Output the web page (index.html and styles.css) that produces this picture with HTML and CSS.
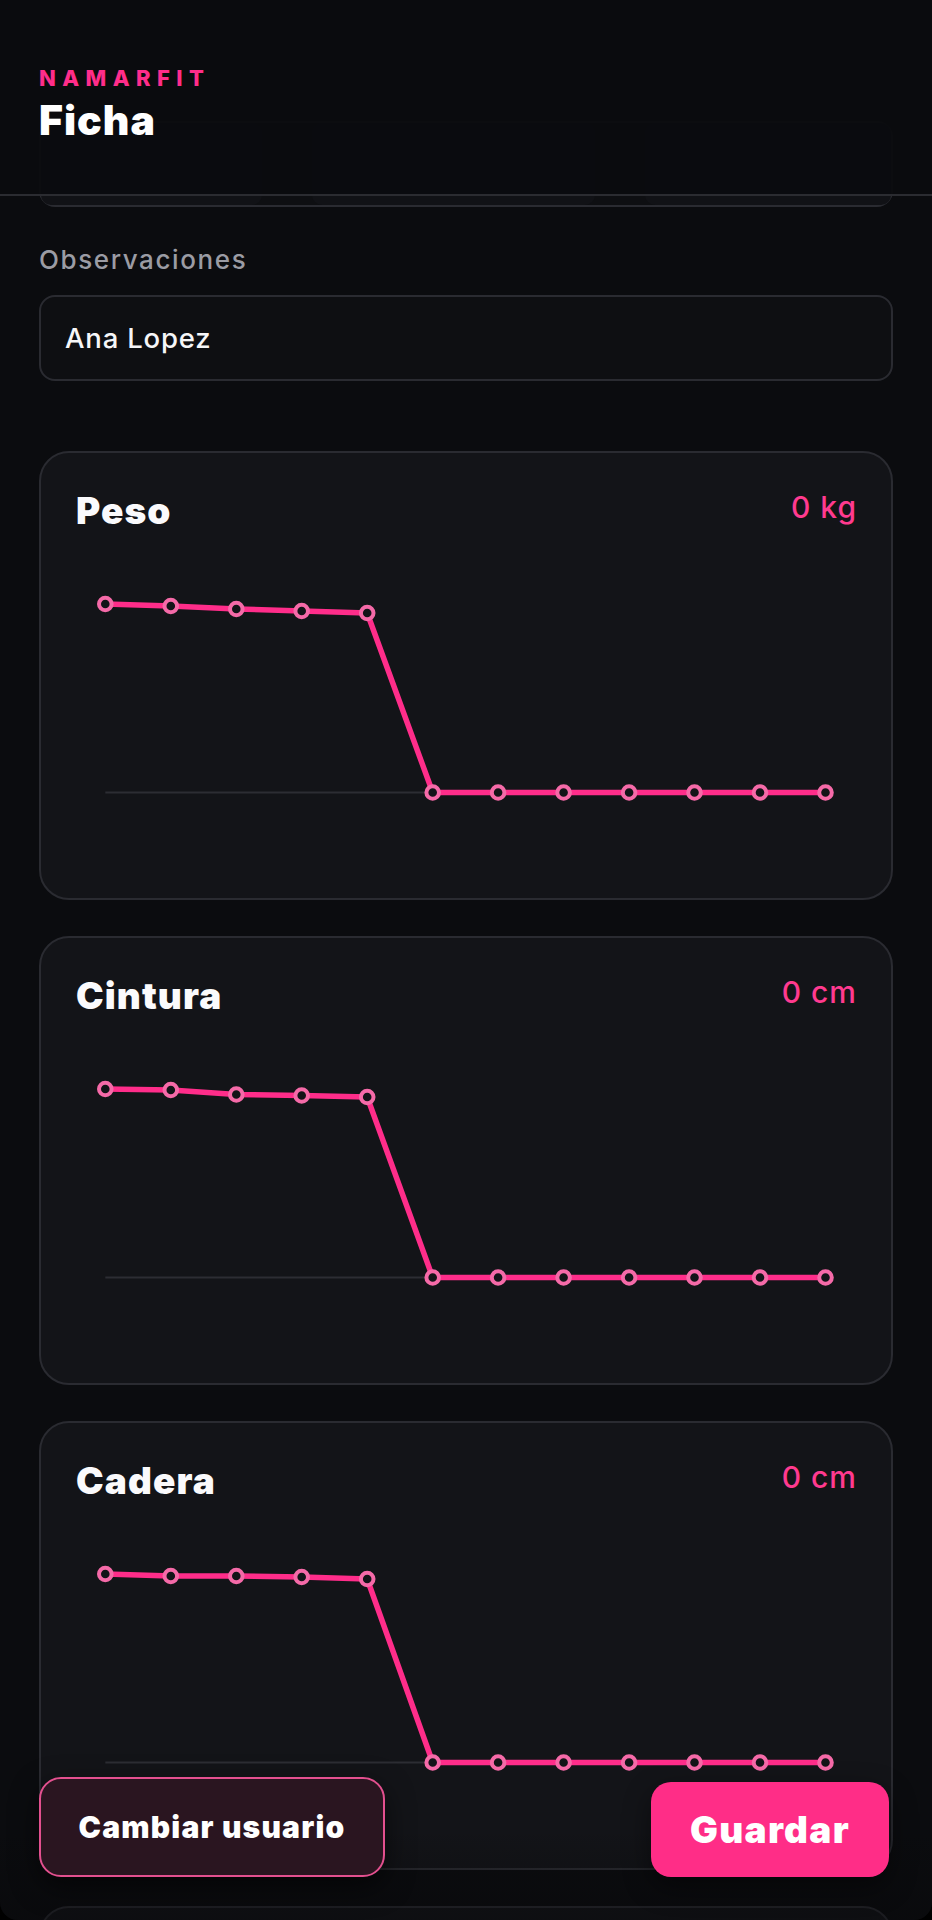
FILE: index.html
```html
<!DOCTYPE html>
<html lang="es">
<head>
<meta charset="utf-8">
<title>Ficha</title>
<link rel="stylesheet" href="styles.css">
</head>
<body>
<div class="screen">
  <main class="content">
    <div class="field-box field-box--hidden">
      <div class="seg seg--a"></div><div class="seg seg--b"></div><div class="seg seg--c"></div>
    </div>

    <div class="field">
      <label class="field-label">Observaciones</label>
      <div class="field-box"><span class="field-value">Ana Lopez</span></div>
    </div>

    <section class="card">
      <div class="card-head">
        <h2 class="card-title">Peso</h2>
        <span class="card-value">0 kg</span>
      </div>
      <svg class="chart" viewBox="0 0 850 291" width="850" height="291">
        <line class="grid" x1="64.3" y1="221.5" x2="784.5" y2="221.5"/>
        <polyline class="trend" points="64.3,33 129.8,35 195.3,38 260.7,40 326.2,42 391.7,221.5 457.1,221.5 522.6,221.5 588.1,221.5 653.5,221.5 719,221.5 784.5,221.5"/>
        <g class="dots">
          <circle cx="64.3" cy="33" r="6.3"/><circle cx="129.8" cy="35" r="6.3"/><circle cx="195.3" cy="38" r="6.3"/><circle cx="260.7" cy="40" r="6.3"/><circle cx="326.2" cy="42" r="6.3"/><circle cx="391.7" cy="221.5" r="6.3"/><circle cx="457.1" cy="221.5" r="6.3"/><circle cx="522.6" cy="221.5" r="6.3"/><circle cx="588.1" cy="221.5" r="6.3"/><circle cx="653.5" cy="221.5" r="6.3"/><circle cx="719" cy="221.5" r="6.3"/><circle cx="784.5" cy="221.5" r="6.3"/>
        </g>
      </svg>
    </section>

    <section class="card">
      <div class="card-head">
        <h2 class="card-title">Cintura</h2>
        <span class="card-value">0 cm</span>
      </div>
      <svg class="chart" viewBox="0 0 850 291" width="850" height="291">
        <line class="grid" x1="64.3" y1="221.5" x2="784.5" y2="221.5"/>
        <polyline class="trend" points="64.3,33 129.8,34 195.3,38.5 260.7,39.5 326.2,41 391.7,221.5 457.1,221.5 522.6,221.5 588.1,221.5 653.5,221.5 719,221.5 784.5,221.5"/>
        <g class="dots">
          <circle cx="64.3" cy="33" r="6.3"/><circle cx="129.8" cy="34" r="6.3"/><circle cx="195.3" cy="38.5" r="6.3"/><circle cx="260.7" cy="39.5" r="6.3"/><circle cx="326.2" cy="41" r="6.3"/><circle cx="391.7" cy="221.5" r="6.3"/><circle cx="457.1" cy="221.5" r="6.3"/><circle cx="522.6" cy="221.5" r="6.3"/><circle cx="588.1" cy="221.5" r="6.3"/><circle cx="653.5" cy="221.5" r="6.3"/><circle cx="719" cy="221.5" r="6.3"/><circle cx="784.5" cy="221.5" r="6.3"/>
        </g>
      </svg>
    </section>

    <section class="card">
      <div class="card-head">
        <h2 class="card-title">Cadera</h2>
        <span class="card-value">0 cm</span>
      </div>
      <svg class="chart" viewBox="0 0 850 291" width="850" height="291">
        <line class="grid" x1="64.3" y1="221.5" x2="784.5" y2="221.5"/>
        <polyline class="trend" points="64.3,33 129.8,35 195.3,35 260.7,36 326.2,38 391.7,221.5 457.1,221.5 522.6,221.5 588.1,221.5 653.5,221.5 719,221.5 784.5,221.5"/>
        <g class="dots">
          <circle cx="64.3" cy="33" r="6.3"/><circle cx="129.8" cy="35" r="6.3"/><circle cx="195.3" cy="35" r="6.3"/><circle cx="260.7" cy="36" r="6.3"/><circle cx="326.2" cy="38" r="6.3"/><circle cx="391.7" cy="221.5" r="6.3"/><circle cx="457.1" cy="221.5" r="6.3"/><circle cx="522.6" cy="221.5" r="6.3"/><circle cx="588.1" cy="221.5" r="6.3"/><circle cx="653.5" cy="221.5" r="6.3"/><circle cx="719" cy="221.5" r="6.3"/><circle cx="784.5" cy="221.5" r="6.3"/>
        </g>
      </svg>
    </section>

    <section class="card card--next"></section>
  </main>

  <header class="topbar">
    <div class="brand">NAMARFIT</div>
    <h1 class="title">Ficha</h1>
  </header>

  <div class="bottom-fade"></div>

  <div class="actions">
    <button class="btn btn--ghost" type="button">Cambiar usuario</button>
    <button class="btn btn--primary" type="button">Guardar</button>
  </div>
</div>
</body>
</html>
```

FILE: styles.css
```css
* { box-sizing: border-box; }

html {
  background: #000;
}

body {
  margin: 0;
  width: 932px;
  height: 1920px;
  overflow: hidden;
  font-family: Inter, "Noto Sans", "Liberation Sans", sans-serif;
  color: #f4f4f6;
}

.screen {
  position: relative;
  width: 932px;
  height: 1920px;
  overflow: hidden;
  background: #0b0c0f;
  border-radius: 0 0 18px 18px;
}

.content {
  display: flex;
  flex-direction: column;
  padding: 121px 39px 0 39px;
}

.field-box {
  height: 86px;
  border: 2px solid #2a2b31;
  border-radius: 16px;
  background: #0e0f12;
  display: flex;
  align-items: center;
  padding: 0 24px;
}

.field-box--hidden {
  padding: 0;
  gap: 50px;
  align-items: stretch;
}

.seg {
  background: #111216;
  border-radius: 10px;
}

.seg--a { flex: 221; }
.seg--b { flex: 282; }
.seg--c { flex: 246; }

.field {
  margin-top: 37px;
  display: flex;
  flex-direction: column;
  gap: 19px;
}

.field-label {
  font-size: 26px;
  line-height: 32px;
  font-weight: 500;
  letter-spacing: 1.6px;
  color: #9b9ca4;
}

.field-value {
  font-size: 27.5px;
  font-weight: 500;
  letter-spacing: 0.8px;
  color: #f6f6f8;
}

.card {
  margin-top: 36px;
  height: 449px;
  flex: none;
  border: 2px solid #2a2b31;
  border-radius: 30px;
  background: #131418;
  padding: 36px 0;
  display: flex;
  flex-direction: column;
}

.content > .field + .card {
  margin-top: 70px;
}

.card-head {
  display: flex;
  justify-content: space-between;
  align-items: flex-start;
  padding: 0 34px 0 35px;
  height: 44px;
}

.card-title {
  margin: 0;
  font-size: 37px;
  line-height: 44px;
  font-weight: 900;
  letter-spacing: 1.1px;
  color: #fafafc;
}

.card-value {
  font-size: 30px;
  line-height: 36px;
  font-weight: 500;
  letter-spacing: 1px;
  color: #ff3a8f;
}

.chart {
  display: block;
  margin-top: 38px;
  width: 850px;
  height: 291px;
}

.grid {
  stroke: #2c2d33;
  stroke-width: 2;
}

.trend {
  fill: none;
  stroke: #ff2d8a;
  stroke-width: 5.5;
  stroke-linejoin: round;
  stroke-linecap: round;
}

.dots circle {
  fill: #131418;
  stroke: #f56aa8;
  stroke-width: 4;
}

.topbar {
  position: absolute;
  top: 0;
  left: 0;
  right: 0;
  height: 196px;
  background: rgba(11, 12, 15, 0.95);
  border-bottom: 2px solid #2b2c31;
  padding: 66px 39px 0 39px;
}

.brand {
  font-size: 22px;
  line-height: 24px;
  font-weight: 800;
  letter-spacing: 6.4px;
  color: #ff2d8a;
}

.title {
  margin: 6px 0 0 0;
  font-size: 41px;
  line-height: 48px;
  font-weight: 900;
  letter-spacing: 1px;
  color: #ffffff;
}

.bottom-fade {
  position: absolute;
  left: 0;
  right: 0;
  bottom: 0;
  height: 90px;
  background: linear-gradient(to bottom, rgba(8, 8, 10, 0) 0%, rgba(8, 8, 10, 0.45) 100%);
  pointer-events: none;
}

.actions {
  position: absolute;
  left: 39px;
  right: 43px;
  bottom: 43px;
  display: flex;
  justify-content: space-between;
  align-items: flex-end;
}

.btn {
  font-family: Inter, "Noto Sans", "Liberation Sans", sans-serif;
  font-weight: 900;
  color: #ffffff;
  cursor: pointer;
  padding: 0;
}

.btn--ghost {
  width: 346px;
  height: 100px;
  border: 2px solid #e3508f;
  border-radius: 22px;
  background: #2a1520;
  font-size: 30px;
  letter-spacing: 1.2px;
  box-shadow: 0 10px 28px rgba(0, 0, 0, 0.55);
}

.btn--primary {
  width: 238px;
  height: 95px;
  border: none;
  border-radius: 20px;
  background: #ff2d87;
  font-size: 37px;
  letter-spacing: 1.3px;
  box-shadow: 0 10px 28px rgba(0, 0, 0, 0.45);
}
```
